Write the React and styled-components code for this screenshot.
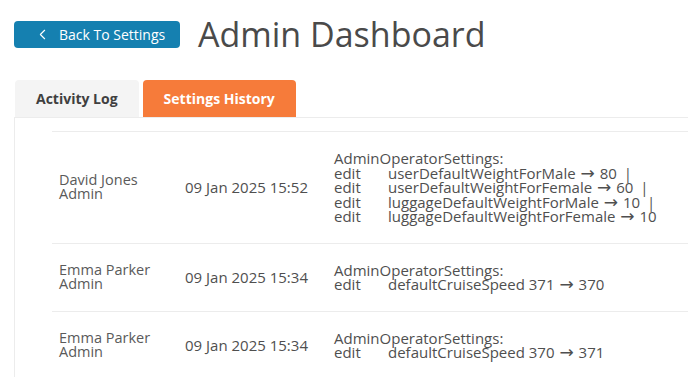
import React from 'react';
import styled, { createGlobalStyle } from 'styled-components';
import { ChevronLeft } from 'lucide-react';

const GlobalStyle = createGlobalStyle`
  body {
    margin: 0;
    background: #fff;
    font-family: "Open Sans", "Noto Sans", sans-serif;
    color: #555;
    overflow: hidden;
  }
`;

const Page = styled.div`
  padding: 14px 0 0 14px;
`;

const Header = styled.div`
  display: flex;
  align-items: center;
  gap: 18px;
`;

const BackButton = styled.button`
  display: flex;
  align-items: center;
  gap: 8px;
  height: 27px;
  width: 166px;
  padding: 0 0 0 20px;
  border: none;
  border-radius: 4px;
  background: #1580b0;
  color: #fff;
  font-family: inherit;
  font-size: 14px;
  cursor: pointer;

  svg {
    width: 17px;
    height: 17px;
    stroke-width: 1.5;
  }
`;

const Title = styled.h1`
  margin: 0;
  font-size: 34px;
  font-weight: 400;
  color: #4a4a4a;
  line-height: 40px;
`;

const Tabs = styled.div`
  display: flex;
  gap: 4px;
  margin-top: 26px;
  padding-left: 1px;
`;

const Tab = styled.div`
  height: 37px;
  padding: 0 21px;
  display: flex;
  align-items: center;
  border-radius: 4px 4px 0 0;
  font-size: 14px;
  font-weight: 700;
  background: ${p => (p.$active ? '#f67b3a' : '#f4f4f4')};
  color: ${p => (p.$active ? '#fff' : '#3f3f3f')};
`;

const Panel = styled.div`
  border-top: 1px solid #ececec;
  border-left: 1px solid #ececec;
  padding: 13px 0 0 37px;
`;

const Row = styled.div`
  display: grid;
  grid-template-columns: 126px 149px 1fr;
  align-items: center;
  padding: 19px 0 19px 7px;
  border-top: 1px solid #ececec;
`;

const Name = styled.div`
  font-size: 14.5px;
  line-height: 14px;
  color: #5a5a5a;
`;

const Stamp = styled.div`
  font-size: 15px;
  color: #4f4f4f;
`;

const Details = styled.div`
  font-size: 15px;
  line-height: 14.5px;
  color: #4f4f4f;
`;

const Change = styled.div`
  display: grid;
  grid-template-columns: 54px 1fr;
  white-space: nowrap;
  height: 14.5px;
`;

const Arrow = styled.span`
  font-family: "DejaVu Sans", sans-serif;
  font-size: 17px;
  line-height: 0;
  margin: 0 1px;
`;

const Bar = styled.span`
  margin-left: 3px;
`;

const entries = [
  {
    name: 'David Jones',
    role: 'Admin',
    at: '09 Jan 2025 15:52',
    changes: [
      ['userDefaultWeightForMale', '80', true],
      ['userDefaultWeightForFemale', '60', true],
      ['luggageDefaultWeightForMale', '10', true],
      ['luggageDefaultWeightForFemale', '10'],
    ],
  },
  {
    name: 'Emma Parker',
    role: 'Admin',
    at: '09 Jan 2025 15:34',
    changes: [['defaultCruiseSpeed 371', '370']],
  },
  {
    name: 'Emma Parker',
    role: 'Admin',
    at: '09 Jan 2025 15:34',
    changes: [['defaultCruiseSpeed 370', '371']],
  },
];

export default function App() {
  return (
    <>
      <GlobalStyle />
      <Page>
        <Header>
          <BackButton>
            <ChevronLeft />
            Back To Settings
          </BackButton>
          <Title>Admin Dashboard</Title>
        </Header>
        <Tabs>
          <Tab>Activity Log</Tab>
          <Tab $active>Settings History</Tab>
        </Tabs>
        <Panel>
          {entries.map((e, i) => (
            <Row key={i}>
              <Name>
                {e.name}
                <br />
                {e.role}
              </Name>
              <Stamp>{e.at}</Stamp>
              <Details>
                AdminOperatorSettings:
                {e.changes.map(([field, value, more], j) => (
                  <Change key={j}>
                    <span>edit</span>
                    <span>
                      {field} <Arrow>→</Arrow> {value}
                      {more && <Bar> |</Bar>}
                    </span>
                  </Change>
                ))}
              </Details>
            </Row>
          ))}
        </Panel>
      </Page>
    </>
  );
}
